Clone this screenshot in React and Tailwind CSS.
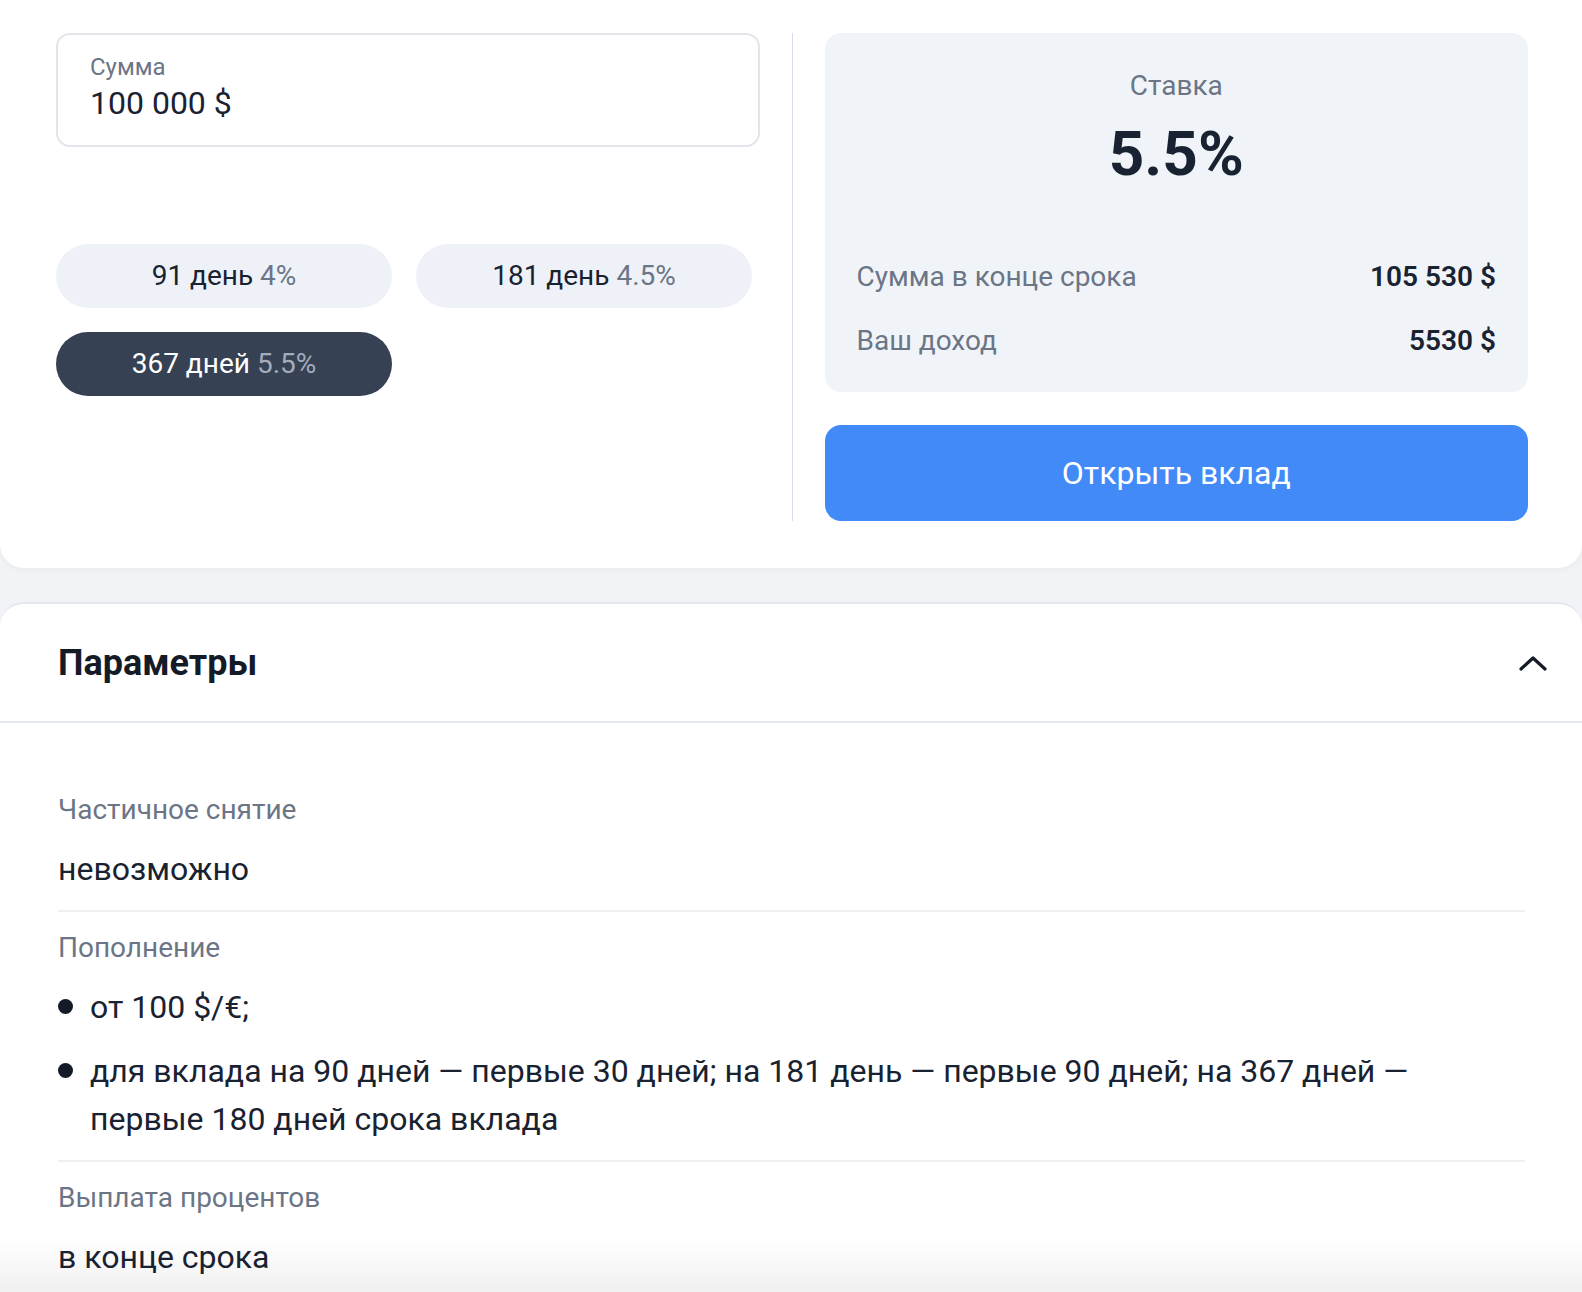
const font = { fontFamily: "Roboto, 'Noto Sans', sans-serif" };

function Chip({ days, rate, active }) {
  return (
    <button
      className={`h-16 rounded-full text-[28px] leading-9 ${
        active ? "bg-[#364253] text-white" : "bg-[#eef2f8] text-[#192231]"
      }`}
    >
      {days} <span className={active ? "text-[#a3acba]" : "text-[#6b7586]"}>{rate}</span>
    </button>
  );
}

function Section({ label, children, last }) {
  return (
    <div className={`pt-[18px] pb-[17px] ${last ? "" : "border-b-2 border-[#eef0f3]"}`}>
      <div className="text-[28px] leading-9 text-[#6b7586]">{label}</div>
      <div className="mt-[17px] text-[32px] leading-[48px] text-[#192231]">{children}</div>
    </div>
  );
}

export default function App() {
  return (
    <div style={font} className="min-h-[1292px] bg-[#f1f3f6] relative overflow-hidden">
      {/* калькулятор */}
      <div className="bg-white rounded-b-[24px] pl-14 pr-[54px] pt-[33px] pb-[47px] flex shadow-[0_2px_6px_rgba(0,0,0,0.04)]">
        <div className="flex-1">
          <div className="h-[114px] border-2 border-[#e3e5ea] rounded-[14px] px-8 pt-4">
            <div className="text-[24px] leading-8 text-[#6b7586]">Сумма</div>
            <div className="text-[32px] leading-10 text-[#192231]">100 000 $</div>
          </div>
          <div className="mt-[97px] grid grid-cols-[336px_336px] gap-6">
            <Chip days="91 день" rate="4%" />
            <Chip days="181 день" rate="4.5%" />
            <Chip days="367 дней" rate="5.5%" active />
          </div>
        </div>
        <div className="w-px bg-[#d5dde8] mx-8" />
        <div className="flex-1">
          <div className="bg-[#f0f4f9] rounded-[16px] px-8 pt-[35px] pb-[33px]">
            <div className="text-center text-[28px] leading-9 text-[#6b7586]">Ставка</div>
            <div className="mt-[14px] text-center text-[62px] leading-[72px] font-bold text-[#192231]">5.5%</div>
            <div className="mt-[69px] flex flex-col gap-7 text-[28px] leading-9">
              <div className="flex justify-between">
                <span className="text-[#6b7586]">Сумма в конце срока</span>
                <span className="font-semibold text-[#192231]">105 530 $</span>
              </div>
              <div className="flex justify-between">
                <span className="text-[#6b7586]">Ваш доход</span>
                <span className="font-semibold text-[#192231]">5530 $</span>
              </div>
            </div>
          </div>
          <button className="mt-[33px] w-full h-24 rounded-[16px] bg-[#418af7] text-white text-[32px]">
            Открыть вклад
          </button>
        </div>
      </div>

      {/* параметры */}
      <div className="mt-[34px] bg-white rounded-t-[24px] border-t-2 border-[#e3e8f0]">
        <div className="h-[119px] flex items-center justify-between pl-[58px] pr-[35px] border-b-2 border-[#e3e8ef]">
          <h2 className="text-[36px] font-bold text-[#141b27]">Параметры</h2>
          <svg width="28" height="16" viewBox="0 0 28 16" fill="none">
            <polyline points="2,14 14,3 26,14" stroke="#141b27" strokeWidth="3.2" strokeLinecap="round" strokeLinejoin="round" />
          </svg>
        </div>
        <div className="pl-[58px] pr-[57px] pt-[51px] pb-10">
          <Section label="Частичное снятие">невозможно</Section>
          <Section label="Пополнение">
            <ul className="flex flex-col gap-4">
              <li className="flex">
                <span className="w-[15px] h-[15px] rounded-full bg-[#141b27] mt-4 mr-[17px] shrink-0" />
                <span>от 100 $/€;</span>
              </li>
              <li className="flex">
                <span className="w-[15px] h-[15px] rounded-full bg-[#141b27] mt-4 mr-[17px] shrink-0" />
                <span className="max-w-[1320px]">
                  для вклада на 90 дней — первые 30 дней; на 181 день — первые 90 дней; на 367 дней — первые 180 дней срока вклада
                </span>
              </li>
            </ul>
          </Section>
          <Section label="Выплата процентов" last>в конце срока</Section>
        </div>
      </div>

      <div className="fixed left-0 right-0 bottom-0 h-[54px] pointer-events-none mix-blend-multiply bg-gradient-to-b from-transparent to-[#f0f0f0]" />
    </div>
  );
}
